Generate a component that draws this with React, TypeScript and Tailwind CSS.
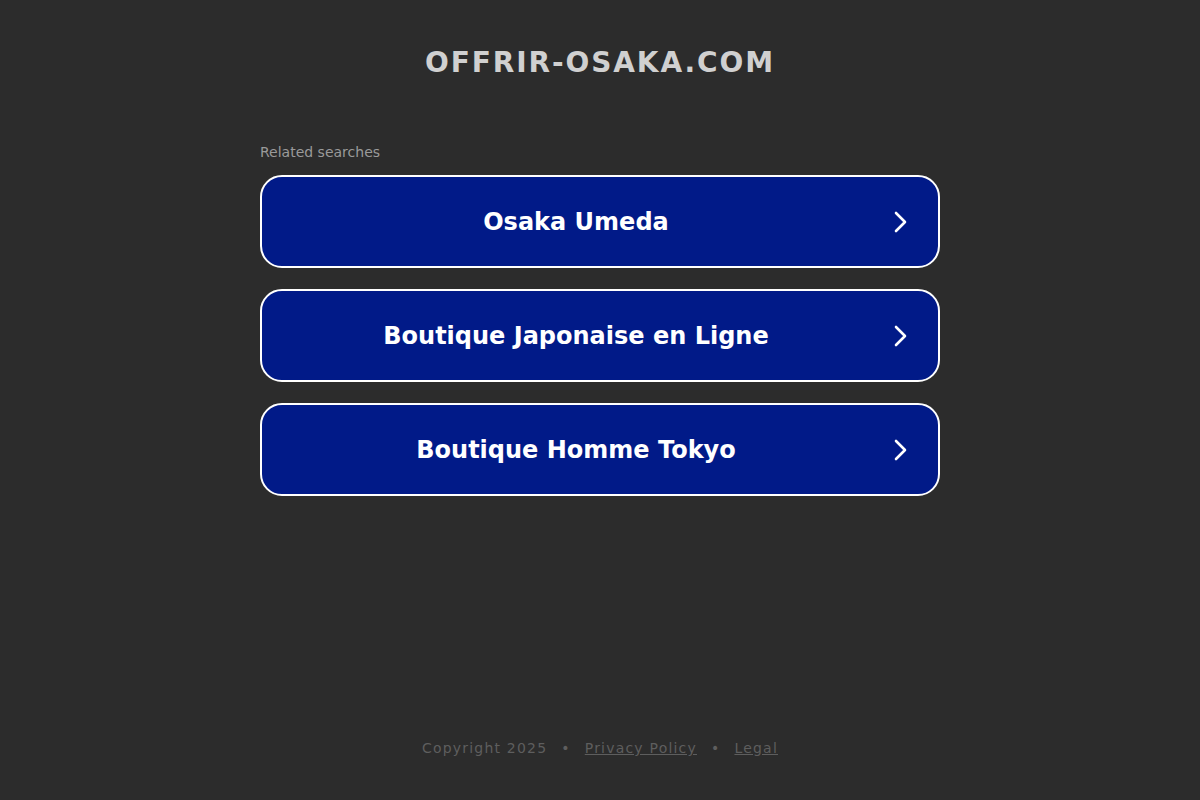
import React from "react";

const items = ["Osaka Umeda", "Boutique Japonaise en Ligne", "Boutique Homme Tokyo"];

export default function App() {
  return (
    <div className="min-h-[800px] w-full bg-[#2c2c2c] flex flex-col items-center" style={{ fontFamily: '"DejaVu Sans", sans-serif' }}>
      <h1 className="mt-[45px] text-[28px] leading-[36px] font-bold tracking-[1.9px] text-[#d0d0d0]">OFFRIR-OSAKA.COM</h1>
      <div className="mt-[63px] w-[680px] flex flex-col">
        <div className="text-[14px] leading-[17px] text-[#9a9a9a] mb-[14px]">Related searches</div>
        <div className="flex flex-col gap-[21px]">
          {items.map((t) => (
            <div key={t} className="relative h-[93px] rounded-[22px] border-2 border-white bg-[#011a88] flex items-center justify-center">
              <span className="text-[24px] font-bold text-white leading-none -ml-[48px]">{t}</span>
              <svg className="absolute right-[27px] top-1/2 -translate-y-1/2" width="20" height="24" viewBox="0 0 20 24" fill="none">
                <path d="M5 3 L14 12 L5 21" stroke="white" strokeWidth="2.6" strokeLinecap="round" strokeLinejoin="round" />
              </svg>
            </div>
          ))}
        </div>
      </div>
      <div className="mt-[242px] text-[14px] leading-[20px] tracking-[1.2px] text-[#5e5e5e] flex items-center gap-[14px]">
        <span>Copyright 2025</span>
        <span>•</span>
        <span className="underline">Privacy Policy</span>
        <span>•</span>
        <span className="underline">Legal</span>
      </div>
    </div>
  );
}
